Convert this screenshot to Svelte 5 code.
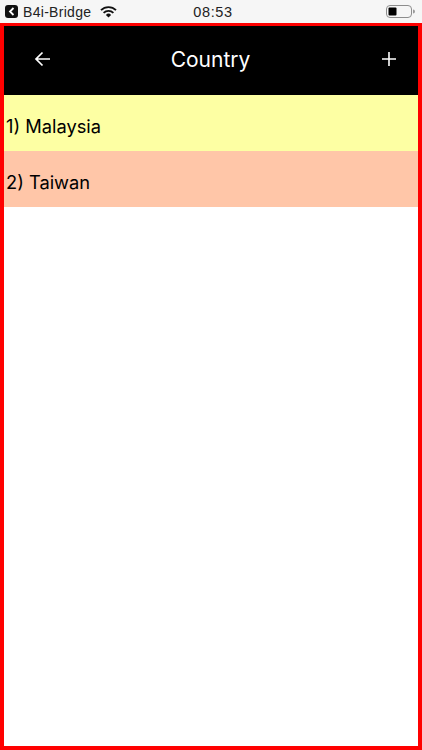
<script>
  const countries = [
    { label: "1) Malaysia", color: "#fdffa3" },
    { label: "2) Taiwan", color: "#ffc6a8" }
  ];
</script>

<style>
  :global(body) {
    margin: 0;
    background: #fff;
  }

  .screen {
    width: 422px;
    height: 750px;
    display: flex;
    flex-direction: column;
    font-family: "Inter", "Liberation Sans", sans-serif;
    overflow: hidden;
  }

  .status {
    height: 23px;
    flex: none;
    background: #f6f6f6;
    display: grid;
    grid-template-columns: 1fr auto 1fr;
    align-items: center;
    padding: 0 7px 0 5px;
    color: #222;
    font-size: 13px;
  }

  .status .left,
  .status .right {
    display: flex;
    align-items: center;
  }

  .status .right {
    justify-content: flex-end;
  }

  .badge {
    width: 13px;
    height: 13px;
    border-radius: 3px;
    background: #111;
    display: flex;
    align-items: center;
    justify-content: center;
    margin-right: 5px;
  }

  .carrier {
    font-family: "Liberation Sans", sans-serif;
    font-size: 14px;
    letter-spacing: 0.3px;
    margin-right: 9px;
  }

  .time {
    font-family: "Liberation Sans", sans-serif;
    font-size: 14.5px;
    font-weight: 500;
    letter-spacing: 0.6px;
    margin-left: 6px;
  }

  .frame {
    flex: 1;
    border: 4px solid #ff0000;
    border-top-width: 3px;
    display: flex;
    flex-direction: column;
    min-height: 0;
  }

  .nav {
    box-sizing: border-box;
    height: 69px;
    flex: none;
    background: #000;
    color: #fff;
    display: grid;
    grid-template-columns: 1fr auto 1fr;
    align-items: center;
    padding: 0 22px 3px 30px;
  }

  .nav .title {
    font-size: 21px;
    font-weight: 400;
    margin-right: 9px;
  }

  .nav .add {
    justify-self: end;
  }

  .row {
    box-sizing: border-box;
    height: 56px;
    display: flex;
    align-items: center;
    padding: 5px 0 0 2px;
    font-size: 18.3px;
    color: #000;
  }
</style>

<div class="screen">
  <div class="status">
    <div class="left">
      <span class="badge">
        <svg width="7" height="9" viewBox="0 0 7 9">
          <path d="M5.5 1 L2 4.5 L5.5 8" fill="none" stroke="#fff" stroke-width="1.8" />
        </svg>
      </span>
      <span class="carrier">B4i-Bridge</span>
      <svg width="17" height="12" viewBox="0 0 17 12">
        <path d="M1 4.2 A10.5 10.5 0 0 1 16 4.2" fill="none" stroke="#111" stroke-width="1.8" />
        <path d="M3.6 6.8 A7 7 0 0 1 13.4 6.8" fill="none" stroke="#111" stroke-width="1.8" />
        <path d="M8.5 11.5 L5.9 8.9 A3.7 3.7 0 0 1 11.1 8.9 Z" fill="#111" />
      </svg>
    </div>
    <div class="time">08:53</div>
    <div class="right">
      <svg width="29" height="13" viewBox="0 0 29 13">
        <rect x="0.5" y="0.5" width="25" height="12" rx="3.5" fill="none" stroke="#8d8d8d" />
        <rect x="2.5" y="2.5" width="8" height="8" rx="1" fill="#000" />
        <path d="M27 4.5 A2 2 0 0 1 27 8.5 Z" fill="#9a9a9a" />
      </svg>
    </div>
  </div>

  <div class="frame">
    <div class="nav">
      <svg width="17" height="16" viewBox="0 0 17 16">
        <path d="M16 8 H2 M8.5 1.5 L2 8 L8.5 14.5" fill="none" stroke="#fff" stroke-width="1.7" />
      </svg>
      <div class="title">Country</div>
      <svg class="add" width="14" height="14" viewBox="0 0 14 14">
        <path d="M7 0 V14 M0 7 H14" fill="none" stroke="#fff" stroke-width="1.6" />
      </svg>
    </div>
    {#each countries as country}
      <div class="row" style="background: {country.color}">{country.label}</div>
    {/each}
  </div>
</div>
